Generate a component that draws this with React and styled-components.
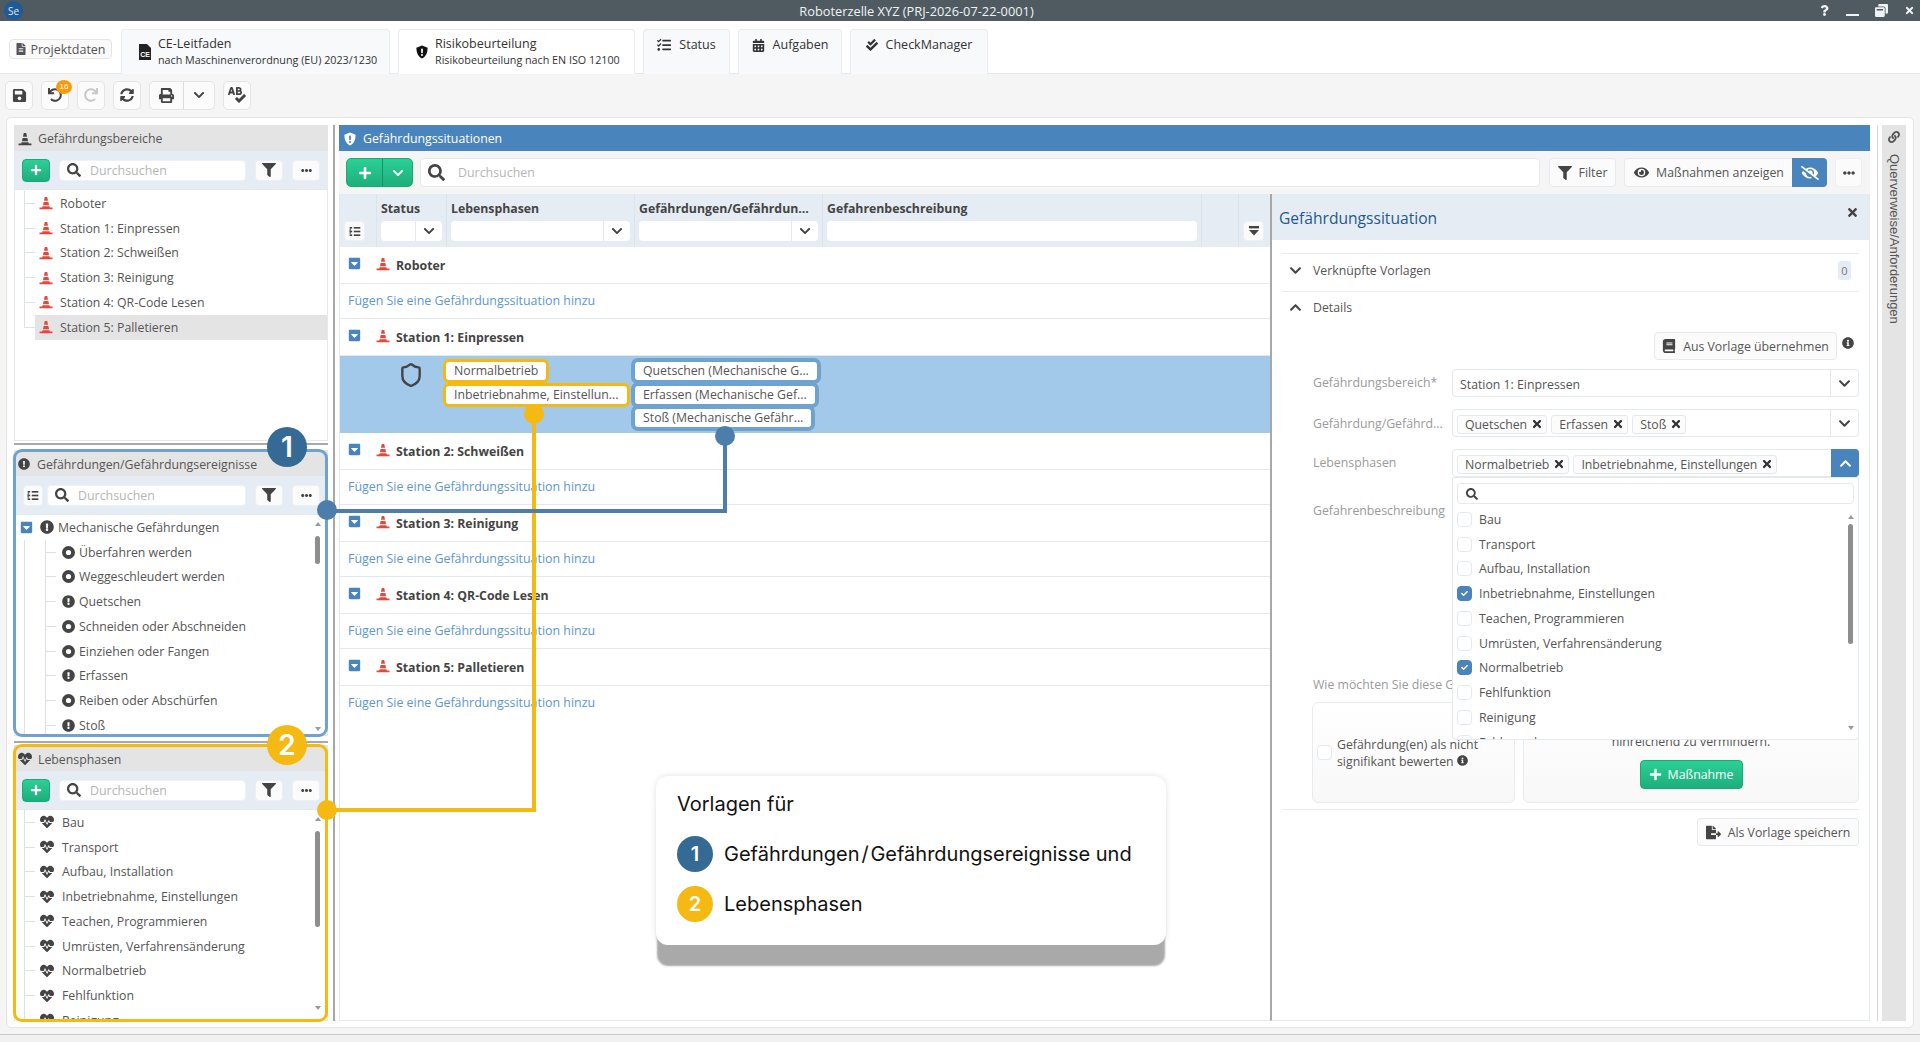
import styled, { createGlobalStyle } from 'styled-components'
import {
  FaFileAlt, FaTasks, FaCalendarAlt, FaCheckDouble, FaSave, FaUndo, FaRedo, FaSyncAlt, FaPrint,
  FaChevronDown, FaChevronUp, FaSpellCheck, FaPlus, FaSearch, FaFilter, FaEllipsisH,
  FaExclamationCircle, FaHeartbeat, FaCaretSquareDown, FaTimes, FaEye, FaEyeSlash,
  FaBook, FaInfoCircle, FaLink, FaWindowRestore, FaQuestion, FaCheck, FaFileExport,
} from 'react-icons/fa'
import { Shield } from 'lucide-react'

const FONT = '"Open Sans", "Noto Sans", sans-serif'
const BLUE = '#4a84bc'
const RING_BLUE = '#6fa3cf'
const YELLOW = '#f5b914'

const GlobalStyle = createGlobalStyle`
  html, body { margin: 0; padding: 0; }
  body { font-family: ${FONT}; font-size: 12px; color: #555; background: #f5f5f5; }
  * { box-sizing: border-box; }
  input { font-family: inherit; }
`

const Page = styled.div`
  position: relative;
  width: 1920px;
  height: 1042px;
  overflow: hidden;
  display: flex;
  flex-direction: column;
`

/* window title */
const TitleBar = styled.header`
  height: 21px;
  flex: none;
  background: #4f5b61;
  display: flex;
  align-items: center;
  padding-left: 4px;
  color: #f0f3f5;
`
const Logo = styled.div`
  width: 19px;
  height: 19px;
  border-radius: 50%;
  background: #1d5a96;
  color: #dfe9f3;
  font-size: 10px;
  display: flex;
  align-items: center;
  justify-content: center;
`
const WindowTitle = styled.div`
  flex: 1;
  text-align: center;
  font-size: 12.8px;
`
const WindowControls = styled.div`
  width: 110px;
  flex: none;
  display: flex;
  align-items: center;
  justify-content: space-between;
  padding: 0 5px 0 9px;
  font-size: 11px;
`
const MinimizeBar = styled.span`
  width: 13px;
  height: 2px;
  margin-top: 9px;
  background: #f0f3f5;
`

/* tabs */
const TabBar = styled.nav`
  height: 53px;
  flex: none;
  background: #fff;
  border-bottom: 1px solid #e4e9ee;
  display: flex;
  align-items: flex-end;
  padding-left: 9px;
  gap: 8px;
`
const PlainTab = styled.div`
  align-self: center;
  margin: 4px 1px 0 0;
  width: 103px;
  height: 20px;
  border: 1px solid #e4e4e4;
  border-radius: 4px;
  background: #fafafa;
  display: flex;
  align-items: center;
  justify-content: center;
  gap: 3px;
  font-size: 12.5px;
  color: #555;
`
const Tab = styled.div`
  width: ${p => p.$width}px;
  height: 45px;
  border: 1px solid #e8ecef;
  border-bottom: none;
  border-radius: 4px 4px 0 0;
  background: ${p => (p.$active ? '#fff' : '#f7f9fb')};
  display: flex;
  align-items: center;
  justify-content: ${p => (p.$center ? 'center' : 'flex-start')};
  padding: 0 0 ${p => (p.$center ? 14 : 0)}px ${p => (p.$center ? 0 : 16)}px;
  gap: ${p => (p.$center ? 8 : 6)}px;
  color: #333;
  margin-bottom: -1px;
  svg { flex: none; }
`
const TabTitle = styled.div`
  font-size: 12.5px;
  line-height: 16px;
`
const TabSub = styled.div`
  font-size: 10.75px;
  line-height: 17px;
`

/* top toolbar */
const ToolBar = styled.div`
  height: 43px;
  flex: none;
  display: flex;
  align-items: center;
  gap: 8px;
  padding: 0 0 1px 5px;
  background: #f5f5f5;
`
const ToolButton = styled.button`
  position: relative;
  width: 28px;
  height: 29px;
  padding: 0;
  border: 1px solid #e4e4e4;
  border-radius: 5px;
  background: #fbfbfb;
  color: ${p => (p.$disabled ? '#c8c8c8' : '#444')};
  display: flex;
  align-items: center;
  justify-content: center;
`
const ToolGroup = styled.div`
  display: flex;
  height: 29px;
  border: 1px solid #e4e4e4;
  border-radius: 5px;
  background: #fbfbfb;
  color: #444;
`
const GroupPart = styled.div`
  width: ${p => p.$width}px;
  display: flex;
  align-items: center;
  justify-content: center;
  & + & { border-left: 1px solid #dcdcdc; }
`
const Badge = styled.span`
  position: absolute;
  top: -2px;
  right: -4px;
  width: 16px;
  height: 14px;
  border-radius: 50%;
  background: #f79a0e;
  color: #fff;
  font-size: 8px;
  display: flex;
  align-items: center;
  justify-content: center;
`

/* main area */
const Workspace = styled.main`
  flex: 1;
  min-height: 0;
  padding: 0 6px 6px;
  background: #f5f5f5;
  border-bottom: 1px solid #c9c9c9;
`
const Card = styled.div`
  height: 100%;
  background: #fff;
  border: 1px solid #e4e4e4;
  border-radius: 5px;
  padding: 7px 0 6px 7px;
  display: flex;
`
const FooterStrip = styled.div`
  height: 7px;
  flex: none;
  background: #f1f1f1;
`
const LeftColumn = styled.section`
  width: 314px;
  flex: none;
  display: flex;
  flex-direction: column;
`
const HSplit = styled.div`
  height: 2px;
  flex: none;
  margin: ${p => p.$margin};
  background: #a8a8a8;
`
const VSplit = styled.div`
  width: ${p => p.$width || 2}px;
  flex: none;
  margin: ${p => p.$margin};
  background: ${p => p.$color || '#a8a8a8'};
`

const Panel = styled.div`
  position: relative;
  height: ${p => p.$height}px;
  flex: none;
  display: flex;
  flex-direction: column;
  &::after {
    content: '';
    display: ${p => (p.$ring ? 'block' : 'none')};
    position: absolute;
    inset: -1px 0 -1px -1px;
    border: 3px solid ${p => p.$ring};
    border-radius: 9px;
    pointer-events: none;
  }
`
const PanelHead = styled.div`
  height: 26px;
  flex: none;
  background: #e4e4e4;
  display: flex;
  align-items: center;
  gap: ${p => p.$gap || 6}px;
  padding: ${p => (p.$lower ? 2 : 1)}px 0 0 4px;
  font-size: 12.3px;
  color: #555;
  svg { color: #444; flex: none; }
`
const PanelTools = styled.div`
  height: 38px;
  flex: none;
  background: #e6ecf4;
  display: flex;
  align-items: center;
  padding: 0 8px;
  gap: 9px;
`
const AddButton = styled.button`
  width: 28px;
  height: 23px;
  flex: none;
  padding: 0;
  border: 1px solid #1ea878;
  border-radius: 4px;
  background: linear-gradient(#2bd095, #1eae7d);
  color: #fff;
  display: flex;
  align-items: center;
  justify-content: center;
`
const SearchBox = styled.label`
  height: ${p => p.$height || 21}px;
  flex: 1;
  min-width: 0;
  background: #fff;
  border: 1px solid ${p => (p.$outlined ? '#e4e9ee' : '#eef1f5')};
  border-radius: 4px;
  display: flex;
  align-items: center;
  gap: ${p => p.$gap || 9}px;
  padding-left: ${p => p.$pad || 7}px;
  color: #444;
  svg { flex: none; }
  input {
    flex: 1;
    min-width: 0;
    border: none;
    outline: none;
    padding: 0;
    font-size: 12.4px;
    background: transparent;
  }
  input::placeholder { color: #b5b5b5; opacity: 1; }
`
const SmallButton = styled.button`
  width: ${p => p.$width || 28}px;
  height: ${p => p.$height || 21}px;
  flex: none;
  padding: 0;
  border: 1px solid #eceff3;
  border-radius: 4px;
  background: #fbfbfb;
  color: #444;
  display: flex;
  align-items: center;
  justify-content: center;
`
const TreeModeButton = styled(SmallButton)`
  margin: 0 -5px 0 1px;
`
const Tree = styled.div`
  position: relative;
  flex: 1;
  min-height: 0;
  overflow: hidden;
  background: #fff;
  border: 1px solid #e4e9ee;
  padding-top: ${p => p.$top}px;
`
const TreeRow = styled.div`
  height: 24.75px;
  display: flex;
  align-items: center;
  font-size: 12.3px;
  color: #555;
  white-space: nowrap;
`
const Branch = styled.span`
  flex: none;
  width: 11px;
  height: 100%;
  margin-left: ${p => p.$offset}px;
  background:
    linear-gradient(#dbe1e7, #dbe1e7) left top / 1px ${p => (p.$last ? '50%' : '100%')} no-repeat,
    linear-gradient(#dbe1e7, #dbe1e7) left center / 100% 1px no-repeat;
`
const ChildWrap = styled.div`
  background: linear-gradient(#dbe1e7, #dbe1e7) 9px 0 / 1px 100% no-repeat;
`
const RowBody = styled.div`
  flex: 1;
  height: 100%;
  display: flex;
  align-items: center;
  gap: ${p => p.$gap}px;
  padding-left: ${p => p.$pad}px;
  background: ${p => (p.$selected ? '#e4e4e4' : 'transparent')};
  svg { flex: none; }
`
const ToggleIcon = styled(FaCaretSquareDown)`
  color: ${BLUE};
  flex: none;
  margin-right: ${p => p.$after || 0}px;
`
const ScrollRail = styled.div`
  position: absolute;
  top: ${p => p.$top}px;
  right: ${p => p.$right}px;
  bottom: ${p => p.$bottom}px;
  width: 6px;
  display: flex;
  flex-direction: column;
  justify-content: space-between;
  align-items: center;
`
const ScrollArrow = styled.span`
  width: 0;
  height: 0;
  border-left: 3.5px solid transparent;
  border-right: 3.5px solid transparent;
  border-${p => (p.$up ? 'bottom' : 'top')}: 4px solid #9a9a9a;
`
const ScrollThumb = styled.span`
  position: absolute;
  top: ${p => p.$top}px;
  left: 0;
  width: 5px;
  height: ${p => p.$height}px;
  border-radius: 3px;
  background: #8e8e8e;
`

/* centre panel */
const CenterPanel = styled.section`
  width: 1531px;
  flex: none;
  display: flex;
  flex-direction: column;
`
const CenterHead = styled.div`
  height: 26px;
  flex: none;
  background: ${BLUE};
  color: #fff;
  display: flex;
  align-items: center;
  gap: 6px;
  padding: 1px 0 0 4px;
  font-size: 12.3px;
`
const CenterTools = styled.div`
  height: 43px;
  flex: none;
  background: #f5f5f5;
  display: flex;
  align-items: center;
  padding: 0 8px 0 7px;
`
const SplitAdd = styled.div`
  width: 67px;
  height: 29px;
  flex: none;
  margin-right: 7px;
  border: 1px solid #1ea878;
  border-radius: 5px;
  background: linear-gradient(#2bd095, #1eae7d);
  color: #fff;
  display: flex;
`
const SplitPart = styled.div`
  width: ${p => p.$width}px;
  display: flex;
  align-items: center;
  justify-content: center;
  & + & { border-left: 1px solid #179066; }
`
const TextButton = styled.div`
  height: ${p => p.$height || 29}px;
  width: ${p => p.$width}px;
  flex: none;
  border: 1px solid #e6e9ed;
  border-radius: 4px;
  background: #fbfbfb;
  display: flex;
  align-items: center;
  justify-content: center;
  gap: 7px;
  font-size: 12.3px;
  color: #555;
  margin-left: ${p => p.$left || 0}px;
  svg { color: #444; flex: none; }
`
const EyeGroup = styled.div`
  width: 203px;
  height: 29px;
  flex: none;
  margin: 0 8px;
  display: flex;
  border: 1px solid #e6e9ed;
  border-radius: 4px;
  background: #fbfbfb;
  font-size: 12.3px;
`
const EyeLabel = styled.div`
  flex: 1;
  display: flex;
  align-items: center;
  justify-content: center;
  gap: 7px;
  color: #555;
  svg { color: #444; }
`
const EyeToggle = styled.div`
  width: 35px;
  margin: -1px;
  border-radius: 0 4px 4px 0;
  background: ${BLUE};
  color: #fff;
  display: flex;
  align-items: center;
  justify-content: center;
`
const CenterBody = styled.div`
  flex: 1;
  min-height: 0;
  display: flex;
`
const TableArea = styled.div`
  width: 931px;
  flex: none;
  border-left: 1px solid #e4e9ee;
  border-bottom: 1px solid #e4e9ee;
`
const COLUMNS = '37px 70px 188px 188px 379px 37px 30px'
const TableHeader = styled.div`
  display: grid;
  grid-template-columns: ${COLUMNS};
  height: 53px;
  background: #e6ecf4;
`
const HeadCell = styled.div`
  display: flex;
  flex-direction: column;
  justify-content: flex-end;
  padding: 0 4px 6px;
  border-right: 1px solid #dbe3ec;
  &:last-child { border-right: none; }
`
const HeadTitle = styled.div`
  height: 21px;
  font-size: 12.3px;
  font-weight: 700;
  color: #444;
  white-space: nowrap;
`
const HeadInput = styled.div`
  height: 20px;
  background: #fff;
  border-radius: 4px;
  display: flex;
  justify-content: flex-end;
  color: #444;
`
const HeadArrow = styled.div`
  width: 27px;
  border-left: 1px solid #e4e9ee;
  display: flex;
  align-items: center;
  justify-content: center;
`
const GroupRow = styled.div`
  height: 37px;
  display: flex;
  align-items: center;
  padding-left: 8px;
  border-bottom: 1px solid #e4e9ee;
  font-size: 12.3px;
  font-weight: 700;
  color: #444;
  svg { flex: none; }
`
const GroupIcons = styled.div`
  display: flex;
  align-items: center;
  gap: 15px;
  margin-right: 6px;
  padding-bottom: 3px;
`
const LinkRow = styled.div`
  height: 35px;
  display: flex;
  align-items: center;
  padding: 0 0 2px 8px;
  border-bottom: 1px solid ${p => (p.$last ? 'transparent' : '#e4e9ee')};
  font-size: 12.4px;
  color: #5c97cf;
`
const SelectedRow = styled.div`
  height: 77px;
  display: grid;
  grid-template-columns: ${COLUMNS};
  background: #a3c9ea;
  padding-top: 6px;
`
const StatusCell = styled.div`
  grid-column: 2;
  display: flex;
  justify-content: center;
  padding-right: 3px;
  color: #444;
`
const ChipStack = styled.div`
  display: flex;
  flex-direction: column;
  align-items: flex-start;
  gap: ${p => p.$gap}px;
  margin-left: ${p => p.$left}px;
`
const Chip = styled.div`
  height: 18px;
  padding: 0 8px;
  background: #fff;
  border-radius: 3px;
  box-shadow: 0 0 0 ${p => p.$ring}px ${p => p.$color};
  font-size: 12.3px;
  line-height: 18px;
  color: #555;
  white-space: nowrap;
`

/* detail pane */
const DetailPane = styled.aside`
  width: 600px;
  flex: none;
  border-left: 2px solid #a8a8a8;
  border-right: 1px solid #e4e9ee;
  border-bottom: 1px solid #e4e9ee;
  display: flex;
  flex-direction: column;
`
const DetailHead = styled.div`
  height: 46px;
  flex: none;
  background: #e6ecf4;
  display: flex;
  justify-content: space-between;
  padding: 13px 10px 0 7px;
  font-size: 15.6px;
  color: #1d5a8a;
  svg { color: #444; margin-top: -1px; }
`
const DetailBody = styled.div`
  flex: 1;
  padding: 13px 10px 0 10px;
  display: flex;
  flex-direction: column;
`
const AccordionRow = styled.div`
  height: ${p => p.$height}px;
  flex: none;
  display: flex;
  align-items: center;
  gap: 11px;
  padding: 0 8px 4px 7px;
  border-top: 1px solid #e8ecef;
  font-size: 12.3px;
  color: #555;
  svg { flex: none; color: #444; }
`
const CountTag = styled.span`
  margin-left: auto;
  width: 13px;
  height: 19px;
  border-radius: 3px;
  background: #e6ecf4;
  color: #777;
  font-size: 11px;
  display: flex;
  align-items: center;
  justify-content: center;
`
const TemplateLine = styled.div`
  height: 28px;
  flex: none;
  margin-top: 6px;
  display: flex;
  justify-content: flex-end;
  gap: 5px;
  padding-right: 5px;
  svg { flex: none; }
`
const InfoDot = styled(FaInfoCircle)`
  color: #444;
  flex: none;
  margin-top: 5px;
`
const FormRow = styled.div`
  display: grid;
  grid-template-columns: 139px 1fr;
  margin-top: ${p => p.$top}px;
  padding-left: 31px;
  height: ${p => p.$height || 28}px;
  flex: none;
`
const FieldLabel = styled.div`
  font-size: 12.3px;
  color: #9a9a9a;
  padding-top: ${p => p.$top}px;
  white-space: nowrap;
  overflow: hidden;
  text-overflow: ellipsis;
`
const FieldBox = styled.div`
  position: relative;
  height: 28px;
  border: 1px solid #e4e9ee;
  border-radius: 4px;
  background: #fff;
  display: flex;
  align-items: center;
  font-size: 12.3px;
  color: #555;
`
const FieldValue = styled.div`
  flex: 1;
  min-width: 0;
  display: flex;
  align-items: center;
  gap: 4px;
  padding: 2px 0 0 ${p => p.$pad}px;
`
const FieldArrow = styled.div`
  width: 28px;
  height: 100%;
  flex: none;
  border-left: 1px solid #e4e9ee;
  display: flex;
  align-items: center;
  justify-content: center;
  color: #444;
`
const FieldArrowOpen = styled(FieldArrow)`
  margin: -1px;
  height: 28px;
  border: none;
  border-radius: 0 4px 4px 0;
  background: ${BLUE};
  color: #fff;
`
const Tag = styled.span`
  height: 19px;
  padding: 0 3px 0 7px;
  border: 1px solid #e4e9ee;
  border-radius: 3px;
  background: #fcfcfc;
  display: flex;
  align-items: center;
  gap: 4px;
  white-space: nowrap;
  svg { color: #333; }
`
const Dropdown = styled.div`
  position: absolute;
  z-index: 2;
  top: 27px;
  left: -1px;
  right: -1px;
  height: 263px;
  background: #fff;
  border: 1px solid #e4e9ee;
  border-radius: 0 0 4px 4px;
  padding: 5px 4px 0;
  overflow: hidden;
`
const OptionList = styled.div`
  margin-top: 3px;
`
const Option = styled.div`
  height: 24.75px;
  display: flex;
  align-items: center;
  gap: 7px;
  font-size: 12.3px;
  color: #555;
`
const Check = styled.span`
  width: 15px;
  height: 15px;
  flex: none;
  border-radius: 4px;
  border: 1px solid ${p => (p.$on ? BLUE : '#e4e9ee')};
  background: ${p => (p.$on ? BLUE : '#fff')};
  color: #fff;
  display: flex;
  align-items: center;
  justify-content: center;
`
const QuestionLine = styled.div`
  margin: 7px 0 0 31px;
  width: 139px;
  height: 20px;
  flex: none;
  overflow: hidden;
  font-size: 12.3px;
  color: #9a9a9a;
  white-space: nowrap;
`
const ChoiceRow = styled.div`
  display: flex;
  gap: 8px;
  margin: 6px 0 0 30px;
  height: 101px;
  flex: none;
`
const ChoiceCard = styled.div`
  width: ${p => p.$width}px;
  flex: none;
  border: 1px solid #e8ecef;
  border-radius: 6px;
  background: linear-gradient(#fff, #f8f8f8);
  display: flex;
  align-items: center;
  flex-direction: ${p => (p.$column ? 'column' : 'row')};
  justify-content: ${p => (p.$column ? 'flex-end' : 'flex-start')};
  padding: ${p => (p.$column ? '0 40px 13px' : '0 4px')};
  gap: ${p => (p.$column ? 10 : 5)}px;
  font-size: 12.3px;
  color: #555;
`
const CardText = styled.div`
  line-height: 17px;
  text-align: ${p => p.$align};
`
const GreenButton = styled.div`
  width: 103px;
  height: 29px;
  flex: none;
  border: 1px solid #1ea878;
  border-radius: 4px;
  background: linear-gradient(#2bd095, #1eae7d);
  color: #fff;
  font-size: 12.3px;
  display: flex;
  align-items: center;
  justify-content: center;
  gap: 6px;
`
const DetailFooter = styled.div`
  margin-top: 6px;
  padding-top: 8px;
  border-top: 1px solid #e8ecef;
  display: flex;
  justify-content: flex-end;
`

/* right rail */
const SideRail = styled.div`
  width: 24px;
  flex: none;
  background: #e4e4e4;
  display: flex;
  flex-direction: column;
  align-items: center;
  padding-top: 6px;
  gap: 11px;
  color: #555;
`
const RailText = styled.div`
  writing-mode: vertical-rl;
  font-family: "Liberation Sans", sans-serif;
  font-size: 13px;
  white-space: nowrap;
`

/* annotations */
const AnnotationLayer = styled.svg`
  position: absolute;
  inset: 0;
  pointer-events: none;
`
const Marker = styled.div`
  position: absolute;
  left: ${p => p.$x - p.$size / 2}px;
  top: ${p => p.$y - p.$size / 2}px;
  width: ${p => p.$size}px;
  height: ${p => p.$size}px;
  border-radius: 50%;
  background: ${p => p.$color};
  color: #fff;
  font-family: Inter, sans-serif;
  font-weight: 600;
  font-size: ${p => p.$font}px;
  display: flex;
  align-items: center;
  justify-content: center;
`
const Callout = styled.div`
  position: absolute;
  left: 656px;
  top: 776px;
  width: 510px;
  height: 169px;
  background: #fff;
  border-radius: 12px;
  padding: 16px 21px;
  font-family: Inter, sans-serif;
  font-size: 20px;
  color: #111;
  box-shadow: 0 22px 2px -1px #a9a9a9, 0 0 6px rgba(0, 0, 0, 0.12);
`
const CalloutTitle = styled.div`
  height: 24px;
  line-height: 24px;
  margin-bottom: 20px;
`
const CalloutRow = styled.div`
  display: flex;
  align-items: center;
  gap: 11px;
  height: 36px;
  margin-bottom: 14px;
`
const CalloutDot = styled.span`
  width: 36px;
  height: 36px;
  border-radius: 50%;
  background: ${p => p.$color};
  color: #fff;
  font-weight: 600;
  display: flex;
  align-items: center;
  justify-content: center;
`

const Cone = ({ color = '#e8463a', size = 14 }) => (
  <svg width={size} height={size} viewBox="0 0 16 16" fill={color}>
    <polygon points="6.6,1 9.4,1 10.3,5.4 5.7,5.4" />
    <polygon points="5.3,6.8 10.7,6.8 11.5,10.6 4.5,10.6" />
    <polygon points="4.1,11.8 11.9,11.8 12.4,13 15.4,13 15.4,15.2 0.6,15.2 0.6,13 3.6,13" />
  </svg>
)

const AlertShield = ({ fill, mark, size = 14 }) => (
  <svg width={size} height={size} viewBox="0 0 16 16">
    <path fill={fill} d="M8 .6 14.4 3c0 5.6-1.8 10-6.4 12.4C3.4 13 1.6 8.6 1.6 3z" />
    <rect x="7" y="4" width="2" height="5.4" rx="1" fill={mark} />
    <circle cx="8" cy="11.4" r="1.2" fill={mark} />
  </svg>
)

const RingDot = () => (
  <svg width="13" height="13" viewBox="0 0 13 13">
    <circle cx="6.5" cy="6.5" r="6.5" fill="#444" />
    <circle cx="6.5" cy="6.5" r="2.6" fill="#fff" />
  </svg>
)

const CeFile = () => (
  <svg width="14" height="16" viewBox="0 0 14 16">
    <path fill="#222" d="M1 0h8l4 4v12H1z" />
    <text x="7" y="12.5" textAnchor="middle" fontSize="7" fontWeight="700" fill="#fff" fontFamily="Liberation Sans">CE</text>
  </svg>
)

const TreeListIcon = () => (
  <svg width="12" height="9" viewBox="0 0 13 11" fill="#444">
    <rect x="0" y="0" width="3" height="2" />
    <rect x="5" y="0" width="8" height="2" />
    <rect x="0" y="2" width="1.2" height="7" />
    <rect x="0" y="4.5" width="3" height="2" />
    <rect x="5" y="4.5" width="8" height="2" />
    <rect x="0" y="9" width="3" height="2" />
    <rect x="5" y="9" width="8" height="2" />
  </svg>
)

const BarsDownIcon = () => (
  <svg width="12" height="10" viewBox="0 0 12 10" fill="#444">
    <rect x="1" y="0" width="10" height="2.4" />
    <polygon points="1,4 11,4 6,9.6" />
  </svg>
)

const areas = ['Roboter', 'Station 1: Einpressen', 'Station 2: Schweißen', 'Station 3: Reinigung', 'Station 4: QR-Code Lesen', 'Station 5: Palletieren']
const hazards = [
  ['Überfahren werden', 'dot'],
  ['Weggeschleudert werden', 'dot'],
  ['Quetschen', 'alert'],
  ['Schneiden oder Abschneiden', 'dot'],
  ['Einziehen oder Fangen', 'dot'],
  ['Erfassen', 'alert'],
  ['Reiben oder Abschürfen', 'dot'],
  ['Stoß', 'alert'],
]
const phases = ['Bau', 'Transport', 'Aufbau, Installation', 'Inbetriebnahme, Einstellungen', 'Teachen, Programmieren', 'Umrüsten, Verfahrensänderung', 'Normalbetrieb', 'Fehlfunktion', 'Reinigung']
const checkedPhases = ['Inbetriebnahme, Einstellungen', 'Normalbetrieb']
const emptyAreas = ['Station 3: Reinigung', 'Station 4: QR-Code Lesen', 'Station 5: Palletieren']

const PanelToolbar = ({ leading }) => (
  <PanelTools>
    {leading}
    <SearchBox>
      <FaSearch size={14} />
      <input placeholder="Durchsuchen" readOnly />
    </SearchBox>
    <SmallButton><FaFilter size={14} /></SmallButton>
    <SmallButton><FaEllipsisH size={11} /></SmallButton>
  </PanelTools>
)

const AddArea = ({ title, children }) => (
  <>
    <GroupRow>
      <GroupIcons>
        <ToggleIcon size={13} />
        <Cone />
      </GroupIcons>
      {title}
    </GroupRow>
    {children}
  </>
)

const AddLink = ({ last }) => <LinkRow $last={last}>Fügen Sie eine Gefährdungssituation hinzu</LinkRow>

const App = () => (
  <Page>
    <GlobalStyle />
    <TitleBar>
      <Logo>Se</Logo>
      <WindowTitle>Roboterzelle XYZ (PRJ-2026-07-22-0001)</WindowTitle>
      <WindowControls>
        <FaQuestion size={11} />
        <MinimizeBar />
        <FaWindowRestore size={13} />
        <FaTimes size={11} />
      </WindowControls>
    </TitleBar>

    <TabBar>
      <PlainTab><FaFileAlt size={12} color="#555" />Projektdaten</PlainTab>
      <Tab $width={269}>
        <CeFile />
        <div>
          <TabTitle>CE-Leitfaden</TabTitle>
          <TabSub>nach Maschinenverordnung (EU) 2023/1230</TabSub>
        </div>
      </Tab>
      <Tab $width={237} $active>
        <AlertShield fill="#111" mark="#fff" />
        <div>
          <TabTitle>Risikobeurteilung</TabTitle>
          <TabSub>Risikobeurteilung nach EN ISO 12100</TabSub>
        </div>
      </Tab>
      <Tab $width={87} $center><FaTasks size={14} /><TabTitle>Status</TabTitle></Tab>
      <Tab $width={104} $center><FaCalendarAlt size={13} /><TabTitle>Aufgaben</TabTitle></Tab>
      <Tab $width={138} $center><FaCheckDouble size={12} /><TabTitle>CheckManager</TabTitle></Tab>
    </TabBar>

    <ToolBar>
      <ToolButton><FaSave size={15} /></ToolButton>
      <ToolButton><FaUndo size={14} /><Badge>16</Badge></ToolButton>
      <ToolButton $disabled><FaRedo size={14} /></ToolButton>
      <ToolButton><FaSyncAlt size={14} /></ToolButton>
      <ToolGroup>
        <GroupPart $width={33}><FaPrint size={15} /></GroupPart>
        <GroupPart $width={31}><FaChevronDown size={12} /></GroupPart>
      </ToolGroup>
      <ToolButton><FaSpellCheck size={18} /></ToolButton>
    </ToolBar>

    <Workspace>
      <Card>
        <LeftColumn>
          <Panel $height={316}>
            <PanelHead><Cone color="#444" />Gefährdungsbereiche</PanelHead>
            <PanelToolbar leading={<AddButton><FaPlus size={12} /></AddButton>} />
            <Tree $top={1}>
              {areas.map((area, i) => (
                <TreeRow key={area}>
                  <Branch $offset={9} $last={i === areas.length - 1} />
                  <RowBody $gap={7} $pad={4} $selected={i === areas.length - 1}>
                    <Cone />
                    {area}
                  </RowBody>
                </TreeRow>
              ))}
            </Tree>
          </Panel>
          <HSplit $margin="2px 0 5px" />
          <Panel $height={286} $ring={RING_BLUE}>
            <PanelHead $gap={7} $lower><FaExclamationCircle size={12} />Gefährdungen/Gefährdungsereignisse</PanelHead>
            <PanelToolbar leading={<TreeModeButton $width={20}><TreeListIcon /></TreeModeButton>} />
            <Tree $top={0}>
              <TreeRow>
                <RowBody $gap={4} $pad={5}>
                  <ToggleIcon size={13} $after={3} />
                  <FaExclamationCircle size={14} color="#444" />
                  Mechanische Gefährdungen
                </RowBody>
              </TreeRow>
              <ChildWrap>
                {hazards.map(([name, kind]) => (
                  <TreeRow key={name}>
                    <Branch $offset={30} />
                    <RowBody $gap={4} $pad={6}>
                      {kind === 'dot' ? <RingDot /> : <FaExclamationCircle size={13} color="#444" />}
                      {name}
                    </RowBody>
                  </TreeRow>
                ))}
              </ChildWrap>
              <ScrollRail $top={7} $right={6} $bottom={4}>
                <ScrollArrow $up />
                <ScrollThumb $top={14} $height={28} />
                <ScrollArrow />
              </ScrollRail>
            </Tree>
          </Panel>
          <HSplit $margin="5px 0 2px" />
          <Panel $height={276} $ring={YELLOW}>
            <PanelHead $lower><FaHeartbeat size={14} />Lebensphasen</PanelHead>
            <PanelToolbar leading={<AddButton><FaPlus size={12} /></AddButton>} />
            <Tree $top={0}>
              {phases.map(phase => (
                <TreeRow key={phase}>
                  <Branch $offset={9} />
                  <RowBody $gap={8} $pad={5}>
                    <FaHeartbeat size={14} color="#444" />
                    {phase}
                  </RowBody>
                </TreeRow>
              ))}
              <ScrollRail $top={7} $right={6} $bottom={10}>
                <ScrollArrow $up />
                <ScrollThumb $top={14} $height={96} />
                <ScrollArrow />
              </ScrollRail>
            </Tree>
          </Panel>
        </LeftColumn>

        <VSplit $margin="0 4px 0 5px" />

        <CenterPanel>
          <CenterHead><AlertShield fill="#fff" mark={BLUE} />Gefährdungssituationen</CenterHead>
          <CenterTools>
            <SplitAdd>
              <SplitPart $width={36}><FaPlus size={14} /></SplitPart>
              <SplitPart $width={30}><FaChevronDown size={12} /></SplitPart>
            </SplitAdd>
            <SearchBox $height={29} $outlined $gap={13} $pad={7}>
              <FaSearch size={17} />
              <input placeholder="Durchsuchen" readOnly />
            </SearchBox>
            <TextButton $width={67} $left={9}><FaFilter size={14} />Filter</TextButton>
            <EyeGroup>
              <EyeLabel><FaEye size={15} />Maßnahmen anzeigen</EyeLabel>
              <EyeToggle><FaEyeSlash size={18} /></EyeToggle>
            </EyeGroup>
            <SmallButton $width={27} $height={29}><FaEllipsisH size={12} /></SmallButton>
          </CenterTools>

          <CenterBody>
            <TableArea>
              <TableHeader>
                <HeadCell><SmallButton $width={21} $height={20}><TreeListIcon /></SmallButton></HeadCell>
                <HeadCell>
                  <HeadTitle>Status</HeadTitle>
                  <HeadInput><HeadArrow><FaChevronDown size={12} /></HeadArrow></HeadInput>
                </HeadCell>
                <HeadCell>
                  <HeadTitle>Lebensphasen</HeadTitle>
                  <HeadInput><HeadArrow><FaChevronDown size={12} /></HeadArrow></HeadInput>
                </HeadCell>
                <HeadCell>
                  <HeadTitle>Gefährdungen/Gefährdun...</HeadTitle>
                  <HeadInput><HeadArrow><FaChevronDown size={12} /></HeadArrow></HeadInput>
                </HeadCell>
                <HeadCell>
                  <HeadTitle>Gefahrenbeschreibung</HeadTitle>
                  <HeadInput />
                </HeadCell>
                <HeadCell />
                <HeadCell><SmallButton $width={21} $height={20}><BarsDownIcon /></SmallButton></HeadCell>
              </TableHeader>

              <AddArea title="Roboter"><AddLink /></AddArea>
              <AddArea title="Station 1: Einpressen">
                <SelectedRow>
                  <StatusCell><Shield size={26} strokeWidth={2.2} /></StatusCell>
                  <ChipStack $gap={6} $left={-1}>
                    <Chip $ring={3} $color={YELLOW}>Normalbetrieb</Chip>
                    <Chip $ring={3} $color={YELLOW}>Inbetriebnahme, Einstellun...</Chip>
                  </ChipStack>
                  <ChipStack $gap={5.5} $left={0}>
                    <Chip $ring={4} $color={RING_BLUE}>Quetschen (Mechanische G...</Chip>
                    <Chip $ring={4} $color={RING_BLUE}>Erfassen (Mechanische Gef...</Chip>
                    <Chip $ring={4} $color={RING_BLUE}>Stoß (Mechanische Gefähr...</Chip>
                  </ChipStack>
                </SelectedRow>
              </AddArea>
              <AddArea title="Station 2: Schweißen"><AddLink /></AddArea>
              {emptyAreas.map((area, i) => (
                <AddArea key={area} title={area}><AddLink last={i === emptyAreas.length - 1} /></AddArea>
              ))}
            </TableArea>

            <DetailPane>
              <DetailHead>Gefährdungssituation<FaTimes size={13} /></DetailHead>
              <DetailBody>
                <AccordionRow $height={38}>
                  <FaChevronDown size={13} />Verknüpfte Vorlagen
                  <CountTag>0</CountTag>
                </AccordionRow>
                <AccordionRow $height={35}>
                  <FaChevronUp size={13} />Details
                </AccordionRow>
                <TemplateLine>
                  <TextButton $width={183} $height={28}><FaBook size={14} />Aus Vorlage übernehmen</TextButton>
                  <InfoDot size={12} />
                </TemplateLine>
                <FormRow $top={9}>
                  <FieldLabel $top={5}>Gefährdungsbereich*</FieldLabel>
                  <FieldBox>
                    <FieldValue $pad={7}>Station 1: Einpressen</FieldValue>
                    <FieldArrow><FaChevronDown size={13} /></FieldArrow>
                  </FieldBox>
                </FormRow>
                <FormRow $top={12}>
                  <FieldLabel $top={6}>Gefährdung/Gefährd...</FieldLabel>
                  <FieldBox>
                    <FieldValue $pad={4}>
                      {['Quetschen', 'Erfassen', 'Stoß'].map(t => <Tag key={t}>{t}<FaTimes size={12} /></Tag>)}
                    </FieldValue>
                    <FieldArrow><FaChevronDown size={13} /></FieldArrow>
                  </FieldBox>
                </FormRow>
                <FormRow $top={12}>
                  <FieldLabel $top={5}>Lebensphasen</FieldLabel>
                  <FieldBox>
                    <FieldValue $pad={4}>
                      {['Normalbetrieb', 'Inbetriebnahme, Einstellungen'].map(t => <Tag key={t}>{t}<FaTimes size={12} /></Tag>)}
                    </FieldValue>
                    <FieldArrowOpen><FaChevronUp size={13} /></FieldArrowOpen>
                    <Dropdown>
                      <SearchBox $height={21} $outlined $gap={8} $pad={8}>
                        <FaSearch size={12} />
                        <input readOnly />
                      </SearchBox>
                      <OptionList>
                        {[...phases, 'Fehlersuche'].map(phase => (
                          <Option key={phase}>
                            <Check $on={checkedPhases.includes(phase)}>
                              {checkedPhases.includes(phase) && <FaCheck size={7} />}
                            </Check>
                            {phase}
                          </Option>
                        ))}
                      </OptionList>
                      <ScrollRail $top={37} $right={4} $bottom={9}>
                        <ScrollArrow $up />
                        <ScrollThumb $top={9} $height={120} />
                        <ScrollArrow />
                      </ScrollRail>
                    </Dropdown>
                  </FieldBox>
                </FormRow>
                <FormRow $top={12} $height={180}>
                  <FieldLabel $top={13}>Gefahrenbeschreibung</FieldLabel>
                </FormRow>
                <QuestionLine>Wie möchten Sie diese Gefährdungssituation behandeln?</QuestionLine>
                <ChoiceRow>
                  <ChoiceCard $width={203}>
                    <Check />
                    <CardText $align="left">
                      Gefährdung(en) als nicht<br />
                      signifikant bewerten <FaInfoCircle size={11} color="#444" />
                    </CardText>
                  </ChoiceCard>
                  <ChoiceCard $width={336} $column>
                    <CardText $align="center">Legen Sie Maßnahmen fest, um das Risiko hinreichend zu vermindern.</CardText>
                    <GreenButton><FaPlus size={13} />Maßnahme</GreenButton>
                  </ChoiceCard>
                </ChoiceRow>
                <DetailFooter>
                  <TextButton $width={162} $height={28}><FaFileExport size={15} />Als Vorlage speichern</TextButton>
                </DetailFooter>
              </DetailBody>
            </DetailPane>
          </CenterBody>
        </CenterPanel>

        <VSplit $width={1} $color="#d6d6d6" $margin="0 4px 0 7px" />
        <SideRail>
          <FaLink size={12} />
          <RailText>Querverweise/Anforderungen</RailText>
        </SideRail>
      </Card>
    </Workspace>
    <FooterStrip />

    {/* Hinweislinien liegen über der Oberfläche */}
    <AnnotationLayer width="1920" height="1042">
      <path d="M534 414V810H327" fill="none" stroke={YELLOW} strokeWidth="4" />
      <path d="M725 436V511H327" fill="none" stroke="#4c7dab" strokeWidth="4" />
      <circle cx="534" cy="414" r="10" fill={YELLOW} />
      <circle cx="327" cy="810" r="10" fill={YELLOW} />
      <circle cx="725" cy="436" r="10" fill="#4c7dab" />
      <circle cx="327" cy="510" r="10" fill="#4c7dab" />
    </AnnotationLayer>
    <Marker $x={287} $y={447} $size={40} $font={28} $color="#356a95">1</Marker>
    <Marker $x={287} $y={745} $size={40} $font={28} $color={YELLOW}>2</Marker>

    <Callout>
      <CalloutTitle>Vorlagen für</CalloutTitle>
      <CalloutRow><CalloutDot $color="#356a95">1</CalloutDot>Gefährdungen{'\u200A'}/{'\u200A'}Gefährdungsereignisse und</CalloutRow>
      <CalloutRow><CalloutDot $color={YELLOW}>2</CalloutDot>Lebensphasen</CalloutRow>
    </Callout>
  </Page>
)

export default App
